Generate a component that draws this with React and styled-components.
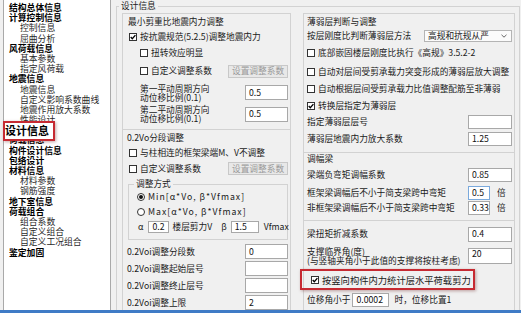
import React from "react";
import styled, { createGlobalStyle } from "styled-components";

const FONT = `"Noto Sans CJK SC", "Noto Sans", "Liberation Sans", sans-serif`;

const GlobalStyle = createGlobalStyle`
  html, body { margin: 0; padding: 0; background: #f0f0f0; }
  body { font-family: ${FONT}; font-size: 8.7px; color: #1a1a1a; line-height: 1.2; }
  #root { width: 521px; height: 313px; overflow: hidden; }
  *, *::before, *::after { box-sizing: border-box; }
`;

const Window = styled.div`
  width: 521px;
  height: 313px;
  display: flex;
  flex-direction: column;
  background: #f0f0f0;
`;

const Main = styled.div`
  flex: 0 0 310px;
  display: flex;
  align-items: flex-start;
  overflow: hidden;
`;

const BottomEdge = styled.div`
  flex: 0 0 3px;
  background: #3f7bc6;
`;

/* ---------- tree ---------- */
const Tree = styled.ul`
  position: relative;
  list-style: none;
  margin: 0 0 0 3px;
  padding: 3px 0 0 0;
  flex: 0 0 108px;
  height: 310px;
  background: #fff;
  border-left: 1px solid #a9a9a9;
  border-right: 1px solid #a9a9a9;
`;

const TreeItem = styled.li`
  height: 10.2px;
  line-height: 10.2px;
  white-space: nowrap;
  font-size: 8.8px;
  padding-left: ${(p) => (p.$child ? 16 : 5)}px;
  font-weight: ${(p) => (p.$child ? 400 : 700)};
  color: ${(p) => (p.$child ? "#2a2a2a" : "#000")};
`;

const Callout = styled.div`
  position: absolute;
  left: -1px;
  top: 121px;
  width: 52px;
  height: 20px;
  border: 2px solid #c62a32;
  background: #fff;
  box-shadow: 1px 1px 3px rgba(90, 0, 0, 0.35);
  display: flex;
  align-items: center;
  font-size: 11px;
  font-weight: 700;
  color: #000;
  white-space: nowrap;
`;

/* ---------- group boxes ---------- */
const Group = styled.fieldset`
  margin: 0 0 0 5px;
  padding: 0;
  flex: 0 0 404px;
  width: 404px;
  height: 340px;
  min-width: 0;
  border: 1px solid #d2d2d2;
`;

const GroupTitle = styled.legend`
  margin-left: 2px;
  padding: 0 2px;
  height: 12px;
  line-height: 12px;
  white-space: nowrap;
`;

const Columns = styled.div`
  display: flex;
  align-items: flex-start;
  gap: 12px;
  padding: 1px 0 0 5px;
`;

const Column = styled.div`
  display: flex;
  flex-direction: column;
`;

const Panel = styled.div`
  display: flex;
  flex-direction: column;
  width: ${(p) => p.$w}px;
  border: 1px solid #d2d2d2;
  ${(p) => (p.$joined ? "border-top: 0;" : "")}
  padding-top: ${(p) => p.$pt ?? 0}px;
  padding-bottom: ${(p) => p.$pb ?? 0}px;
`;

const SubGroup = styled.fieldset`
  margin: 2px 0 0 5px;
  padding: 0 0 5px 0;
  width: 160px;
  min-width: 0;
  border: 1px solid #d2d2d2;
`;

const SubTitle = styled.legend`
  margin-left: 5px;
  padding: 0 2px;
  height: 12px;
  line-height: 12px;
  white-space: nowrap;
`;

/* ---------- rows & controls ---------- */
const Row = styled.div`
  display: flex;
  align-items: center;
  height: ${(p) => p.$h}px;
  padding-left: ${(p) => p.$in ?? 0}px;
  padding-right: ${(p) => p.$pr ?? 2}px;
  margin-top: ${(p) => p.$mt ?? 0}px;
  white-space: nowrap;
`;

const Text = styled.span`
  white-space: nowrap;
  line-height: 10px;
  margin-left: ${(p) => p.$ml ?? 0}px;
  letter-spacing: ${(p) => p.$ls ?? 0}px;
`;

const Stack = styled.span`
  display: flex;
  flex-direction: column;
  line-height: 9px;
  white-space: nowrap;
`;

const Field = styled.div`
  flex: 0 0 auto;
  width: ${(p) => p.$w}px;
  height: ${(p) => p.$h ?? 15}px;
  margin-left: ${(p) => (p.$ml == null ? "auto" : `${p.$ml}px`)};
  background: #fff;
  border: 1px solid ${(p) => (p.$focus ? "#7aa9dc" : "#a8a8a8")};
  display: flex;
  align-items: ${(p) => (p.$top ? "flex-start" : "center")};
  padding-left: 3px;
  line-height: 10px;
  color: #111;
`;

const UnitWrap = styled.div`
  margin-left: auto;
  width: 44px;
  display: flex;
  align-items: center;
`;

const Button = styled.div`
  margin-left: auto;
  width: 60px;
  height: 13px;
  display: flex;
  align-items: center;
  justify-content: center;
  background: #e8e8e8;
  border: 1px solid #c8c8c8;
  color: #9a9a9a;
  line-height: 10px;
`;

const Combo = styled.div`
  margin-left: auto;
  width: 88px;
  height: 12px;
  display: flex;
  align-items: center;
  justify-content: space-between;
  padding: 0 4px 0 3px;
  background: #fbfbfb;
  border: 1px solid #b4b4b4;
  line-height: 10px;
`;

const BoxMark = styled.span`
  flex: 0 0 8px;
  width: 8px;
  height: 8px;
  margin-right: 3px;
  border: 1px solid #333;
  background: #fff;
  display: inline-flex;
  align-items: center;
  justify-content: center;
`;

const RadioMark = styled.span`
  flex: 0 0 8px;
  width: 8px;
  height: 8px;
  margin-right: 3px;
  border-radius: 50%;
  border: 1px solid #333;
  background: #fff;
  display: inline-flex;
  align-items: center;
  justify-content: center;
  &::after {
    content: "";
    width: 4px;
    height: 4px;
    border-radius: 50%;
    background: ${(p) => (p.$on ? "#111" : "transparent")};
  }
`;

const Highlight = styled.div`
  display: flex;
  align-items: center;
  width: 175px;
  height: 21px;
  margin: 1px 0 0 -4px;
  padding-left: 9px;
  border: 2px solid #c62a32;
  box-shadow: 1px 1px 3px rgba(90, 0, 0, 0.35);
  font-size: 9.3px;
  white-space: nowrap;
`;

function CheckBox({ checked }) {
  return (
    <BoxMark>
      {checked && (
        <svg width="6" height="6" viewBox="0 0 6 6">
          <path d="M0.7 3 L2.3 4.7 L5.4 1.1" fill="none" stroke="#000" strokeWidth="1.3" />
        </svg>
      )}
    </BoxMark>
  );
}

function Chevron() {
  return (
    <svg width="6" height="4" viewBox="0 0 6 4">
      <path d="M0.5 0.8 L3 3.2 L5.5 0.8" fill="none" stroke="#555" strokeWidth="0.9" />
    </svg>
  );
}

const treeItems = [
  ["结构总体信息", 0],
  ["计算控制信息", 0],
  ["控制信息", 1],
  ["屈曲分析", 1],
  ["风荷载信息", 0],
  ["基本参数", 1],
  ["指定风荷载", 1],
  ["地震信息", 0],
  ["地震信息", 1],
  ["自定义影响系数曲线", 1],
  ["地震作用放大系数", 1],
  ["性能设计", 1],
  ["设计信息", 0],
  ["荷载信息", 0],
  ["构件设计信息", 0],
  ["包络设计", 0],
  ["材料信息", 0],
  ["材料参数", 1],
  ["钢筋强度", 1],
  ["地下室信息", 0],
  ["荷载组合", 0],
  ["组合系数", 1],
  ["自定义组合", 1],
  ["自定义工况组合", 1],
  ["鉴定加固", 0],
];

export default function App() {
  return (
    <>
      <GlobalStyle />
      <Window>
        <Main>
          <Tree>
            {treeItems.map(([t, c], i) => (
              <TreeItem key={i} $child={c === 1}>
                {t}
              </TreeItem>
            ))}
            <Callout>设计信息</Callout>
          </Tree>

          <Group>
            <GroupTitle>设计信息</GroupTitle>
            <Columns>
              {/* left column */}
              <Column>
                <Panel $w={169} $pb={6}>
                  <Row $h={15} $in={5}>
                    <Text>最小剪重比地震内力调整</Text>
                  </Row>
                  <Row $h={15} $in={6}>
                    <CheckBox checked />
                    <Text>按抗震规范(5.2.5)调整地震内力</Text>
                  </Row>
                  <Row $h={18} $in={17}>
                    <CheckBox />
                    <Text>扭转效应明显</Text>
                  </Row>
                  <Row $h={18} $in={17}>
                    <CheckBox />
                    <Text>自定义调整系数</Text>
                    <Button>设置调整系数</Button>
                  </Row>
                  <Row $h={25} $in={17}>
                    <Stack>
                      <span>第一平动周期方向</span>
                      <span>动位移比例(0.1)</span>
                    </Stack>
                    <Field $w={43}>0.5</Field>
                  </Row>
                  <Row $h={18} $in={17}>
                    <Stack>
                      <span>第二平动周期方向</span>
                      <span>动位移比例(0.1)</span>
                    </Stack>
                    <Field $w={43}>0.5</Field>
                  </Row>
                </Panel>

                <Panel $w={169} $joined $pb={30}>
                  <Row $h={15} $in={4}>
                    <Text>0.2Vo分段调整</Text>
                  </Row>
                  <Row $h={16} $in={6}>
                    <CheckBox />
                    <Text>与柱相连的框架梁端M、V不调整</Text>
                  </Row>
                  <Row $h={15} $in={6}>
                    <CheckBox />
                    <Text>自定义调整系数</Text>
                    <Button>设置调整系数</Button>
                  </Row>
                  <SubGroup>
                    <SubTitle>调整方式</SubTitle>
                    <Row $h={13} $in={8}>
                      <RadioMark $on />
                      <Text $ls={1}>Min[α*Vo, β*Vfmax]</Text>
                    </Row>
                    <Row $h={17} $in={8}>
                      <RadioMark />
                      <Text $ls={1}>Max[α*Vo, β*Vfmax]</Text>
                    </Row>
                    <Row $h={14} $in={9}>
                      <Text>α</Text>
                      <Field $w={21} $h={12} $ml={5}>0.2</Field>
                      <Text $ml={3}>楼层剪力V</Text>
                      <Text $ml={9}>β</Text>
                      <Field $w={28} $h={12} $ml={4}>1.5</Field>
                      <Text $ml={5}>Vfmax</Text>
                    </Row>
                  </SubGroup>
                  <Row $h={17} $in={4} $mt={3}>
                    <Text>0.2Voi调整分段数</Text>
                    <Field $w={43}>0</Field>
                  </Row>
                  <Row $h={17} $in={4}>
                    <Text>0.2Voi调整起始层号</Text>
                    <Field $w={43} />
                  </Row>
                  <Row $h={17} $in={4}>
                    <Text>0.2Voi调整终止层号</Text>
                    <Field $w={43} />
                  </Row>
                  <Row $h={17} $in={4}>
                    <Text>0.2Voi调整上限</Text>
                    <Field $w={43}>2</Field>
                  </Row>
                </Panel>
              </Column>

              {/* right column */}
              <Column>
                <Panel $w={212} $pb={4}>
                  <Row $h={15} $in={3}>
                    <Text>薄弱层判断与调整</Text>
                  </Row>
                  <Row $h={13} $in={3}>
                    <Text>按层刚度比判断薄弱层方法</Text>
                    <Combo>
                      <span>高规和抗规从严</span>
                      <Chevron />
                    </Combo>
                  </Row>
                  <Row $h={21} $in={3}>
                    <CheckBox />
                    <Text>底部嵌固楼层刚度比执行《高规》3.5.2-2</Text>
                  </Row>
                  <Row $h={17} $in={3}>
                    <CheckBox />
                    <Text>自动对层间受剪承载力突变形成的薄弱层放大调整</Text>
                  </Row>
                  <Row $h={17} $in={3}>
                    <CheckBox />
                    <Text>自动根据层间受剪承载力比值调整配筋至非薄弱</Text>
                  </Row>
                  <Row $h={17} $in={3}>
                    <CheckBox checked />
                    <Text>转换层指定为薄弱层</Text>
                  </Row>
                  <Row $h={16} $in={3}>
                    <Text>指定薄弱层层号</Text>
                    <Field $w={44} $h={14} />
                  </Row>
                  <Row $h={18} $in={3}>
                    <Text>薄弱层地震内力放大系数</Text>
                    <Field $w={44} $h={14}>1.25</Field>
                  </Row>
                </Panel>

                <Panel $w={212} $joined $pb={5}>
                  <Row $h={12} $in={3}>
                    <Text>调幅梁</Text>
                  </Row>
                  <Row $h={20} $in={3}>
                    <Text>梁端负弯矩调幅系数</Text>
                    <Field $w={44} $h={14}>0.85</Field>
                  </Row>
                  <Row $h={16} $in={3}>
                    <Text>框架梁调幅后不小于简支梁跨中弯矩</Text>
                    <UnitWrap>
                      <Field $w={22} $h={14} $ml={0} $focus>0.5</Field>
                      <Text $ml={7}>倍</Text>
                    </UnitWrap>
                  </Row>
                  <Row $h={14} $in={3}>
                    <Text>非框架梁调幅后不小于简支梁跨中弯矩</Text>
                    <UnitWrap>
                      <Field $w={22} $h={14} $ml={0}>0.33</Field>
                      <Text $ml={7}>倍</Text>
                    </UnitWrap>
                  </Row>
                </Panel>

                <Panel $w={212} $joined $pt={4} $pb={30}>
                  <Row $h={18} $in={3}>
                    <Text>梁扭矩折减系数</Text>
                    <Field $w={44} $h={15}>0.4</Field>
                  </Row>
                  <Row $h={25} $in={3}>
                    <Stack>
                      <span>支撑临界角(度)</span>
                      <span>(与竖轴夹角小于此值的支撑将按柱考虑)</span>
                    </Stack>
                    <Field $w={44} $h={16} $top>20</Field>
                  </Row>
                  <Highlight>
                    <CheckBox checked />
                    <Text>按竖向构件内力统计层水平荷载剪力</Text>
                  </Highlight>
                  <Row $h={19} $in={3}>
                    <Text>位移角小于</Text>
                    <Field $w={37} $h={14} $ml={2}>0.0002</Field>
                    <Text $ml={5}>时，位移比置1</Text>
                  </Row>
                </Panel>
              </Column>
            </Columns>
          </Group>
        </Main>
        <BottomEdge />
      </Window>
    </>
  );
}
